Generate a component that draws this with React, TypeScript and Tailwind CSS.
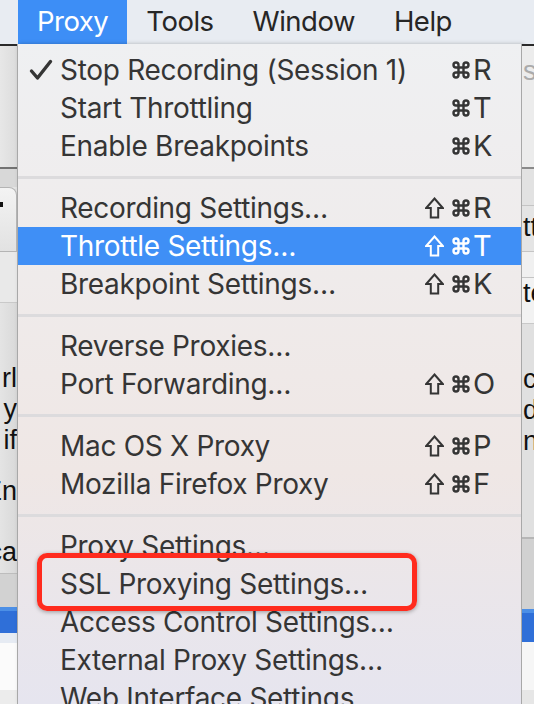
import React from "react";

type Item = {
  label: string;
  check?: boolean;
  shift?: boolean;
  key?: string;
  active?: boolean;
};

const groups: Item[][] = [
  [
    { label: "Stop Recording (Session 1)", check: true, key: "R" },
    { label: "Start Throttling", key: "T" },
    { label: "Enable Breakpoints", key: "K" },
  ],
  [
    { label: "Recording Settings…", shift: true, key: "R" },
    { label: "Throttle Settings…", shift: true, key: "T", active: true },
    { label: "Breakpoint Settings…", shift: true, key: "K" },
  ],
  [
    { label: "Reverse Proxies…" },
    { label: "Port Forwarding…", shift: true, key: "O" },
  ],
  [
    { label: "Mac OS X Proxy", shift: true, key: "P" },
    { label: "Mozilla Firefox Proxy", shift: true, key: "F" },
  ],
  [
    { label: "Proxy Settings…" },
    { label: "SSL Proxying Settings…" },
    { label: "Access Control Settings…" },
    { label: "External Proxy Settings…" },
    { label: "Web Interface Settings…" },
  ],
];

function Check() {
  return (
    <svg width="24" height="22" viewBox="0 0 24 22" fill="none">
      <path
        d="M2.5 12 L8.5 19 L21.5 2.5"
        stroke="currentColor"
        strokeWidth="3.4"
        strokeLinecap="round"
        strokeLinejoin="round"
      />
    </svg>
  );
}

function ShiftIcon() {
  return (
    <svg width="19" height="22" viewBox="0 0 19 22" fill="none">
      <path
        d="M9.5 1.5 L17.8 11 H13.2 V20.5 H5.8 V11 H1.2 Z"
        stroke="currentColor"
        strokeWidth="2"
        strokeLinejoin="miter"
      />
    </svg>
  );
}

function CmdIcon() {
  return (
    <svg width="20" height="20" viewBox="0 0 24 24" fill="none">
      <path
        d="M15 6v12a3 3 0 1 0 3-3H6a3 3 0 1 0 3 3V6a3 3 0 1 0-3 3h12a3 3 0 1 0-3-3"
        stroke="currentColor"
        strokeWidth="2.9"
        strokeLinecap="round"
        strokeLinejoin="round"
      />
    </svg>
  );
}

function MenuRow({ item }: { item: Item }) {
  return (
    <div
      className={
        item.active
          ? "flex h-[38px] items-center bg-[#3f8ff6] text-white"
          : "flex h-[38px] items-center text-[#353535]"
      }
    >
      <div className="flex w-[42px] shrink-0 items-center pl-[11px]">
        {item.check ? <Check /> : null}
      </div>
      <div className="flex-1 whitespace-nowrap">{item.label}</div>
      {item.key ? (
        <div className="flex items-center pr-[14px]">
          <div className="flex w-[60px] items-center justify-end gap-[7px]">
            {item.shift ? <ShiftIcon /> : null}
            <CmdIcon />
          </div>
          <div className="w-[36px] pl-[2px] text-[29px]">{item.key}</div>
        </div>
      ) : null}
    </div>
  );
}

function Separator() {
  return (
    <div className="flex h-[24px] items-center">
      <div className="h-[3px] w-full bg-[#dcdbdd]" />
    </div>
  );
}

function LeftStrip() {
  const txt = "flex h-[31px] items-center justify-end overflow-hidden whitespace-nowrap text-[27px] text-[#111]";
  return (
    <div className="flex w-[17px] shrink-0 flex-col border-t-2 border-[#2a2a2a] font-[family-name:'Liberation_Sans',sans-serif]">
      <div className="h-[121px] bg-linear-to-r from-[#e7e7e7] to-[#dcdcdc]" />
      <div className="h-[20px] border-t-2 border-[#727272] bg-[#d8d8d8]" />
      <div className="relative h-[65px] rounded-tr-[8px] border border-l-0 border-[#b4b4b4] bg-linear-to-b from-[#f3f3f3] to-[#e2e2e2]">
        <div className="mt-[14px] h-[5px] w-[3px] bg-[#111]" />
      </div>
      <div className="h-[50px] bg-[#e9e9e9]" />
      <div className="flex h-[271px] flex-col border-t border-[#c9c9c9] bg-linear-to-r from-[#e4e4e4] to-[#d9d9d9] pt-[60px]">
        <div className={txt}>rl</div>
        <div className={txt}>y</div>
        <div className={txt}>if</div>
        <div className="h-[20px]" />
        <div className={txt}>En</div>
        <div className="h-[30px]" />
        <div className={txt}>ca</div>
      </div>
      <div className="h-[34px] border-t border-[#bdbdbd] bg-[#d2d2d2]" />
      <div className="h-[26px] border-t-[4px] border-[#4c8fe6] bg-[#2f6fd8]" />
      <div className="h-[10px] bg-[#e6ebf3]" />
      <div className="h-[47px] bg-[#fbfbfb]" />
      <div className="flex-1 bg-[#ececec]" />
    </div>
  );
}

function RightStrip() {
  const txt = "flex h-[31px] items-center overflow-hidden whitespace-nowrap pl-[1px] text-[27px] text-[#111]";
  return (
    <div className="flex w-[12px] shrink-0 flex-col border-t-2 border-[#2a2a2a] font-[family-name:'Liberation_Sans',sans-serif]">
      <div className="flex h-[121px] flex-col bg-[#ececec] pt-[10px]">
        <div className="flex h-[31px] items-center overflow-hidden whitespace-nowrap pl-[1px] text-[27px] text-[#ababab]">
          s
        </div>
      </div>
      <div className="h-[38px] border-t-2 border-[#8a8a8a] bg-[#e2e2e2]" />
      <div className="flex h-[46px] flex-col border-t border-[#c4c4c4] bg-[#e4e4e4]">
        <div className={txt + " mt-[6px]"}>tt</div>
      </div>
      <div className="h-[26px] border-t border-[#c4c4c4] bg-[#f0f0f0]" />
      <div className="flex h-[46px] flex-col border-t border-[#c4c4c4] bg-[#f2f2f2]">
        <div className={txt}>te</div>
      </div>
      <div className="flex h-[214px] flex-col border-t border-[#c9c9c9] bg-[#e0e0e0] pt-[40px]">
        <div className={txt}>c</div>
        <div className={txt}>d</div>
        <div className={txt}>n</div>
      </div>
      <div className="h-[72px] border-t-2 border-[#b6b6b6] bg-[#d1d1d1]" />
      <div className="h-[33px] border-t-[4px] border-[#4c8fe6] bg-[#2f6fd8]" />
      <div className="h-[48px] bg-[#f6f6f6]" />
      <div className="flex-1 bg-[#e6e6e6]" />
    </div>
  );
}

export default function App() {
  return (
    <div className="relative h-[704px] w-[534px] overflow-hidden bg-[#e5e5e5] font-[family-name:Inter,'Liberation_Sans',sans-serif]">
      {/* menu bar */}
      <div className="flex h-[44px] items-center bg-[#e8ecf2] pl-[18px] text-[27.5px] tracking-[-0.5px] text-[#262626]">
        <div className="flex h-full items-center bg-[#3d8ef6] px-[19px] text-white">Proxy</div>
        <div className="flex h-full items-center px-[19px]">Tools</div>
        <div className="flex h-full items-center px-[20px]">Window</div>
        <div className="flex h-full items-center px-[19px]">Help</div>
      </div>

      <div className="flex h-[660px]">
        <LeftStrip />
        {/* dropdown menu */}
        <div className="w-[505px] shrink-0 border-x border-[#a8a8a8] bg-linear-to-b from-[#eff0f2] via-[#efe7e5] via-65% to-[#e6e5ef] pt-[7px] text-[28px] tracking-[-0.3px] shadow-[2px_0_4px_rgba(0,0,0,0.25)]">
          {groups.map((g, gi) => (
            <div key={gi}>
              {gi > 0 ? <Separator /> : null}
              {g.map((it) => (
                <MenuRow key={it.label} item={it} />
              ))}
            </div>
          ))}
        </div>
        <RightStrip />
      </div>

      {/* annotation highlight */}
      <div className="absolute left-[37px] top-[553px] h-[58px] w-[380px] rounded-[10px] border-[5px] border-[#ff2b1e] shadow-[0_1px_4px_rgba(0,0,0,0.35)]" />
    </div>
  );
}
